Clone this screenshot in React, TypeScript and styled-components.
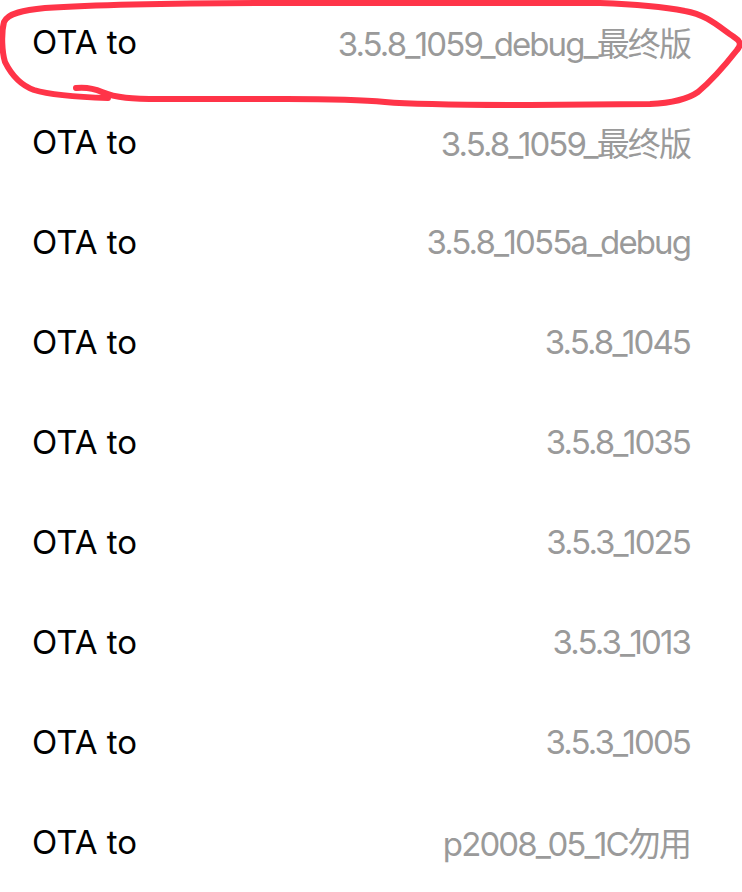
import styled, { createGlobalStyle } from "styled-components";

const versions = [
  "3.5.8_1059_debug_最终版",
  "3.5.8_1059_最终版",
  "3.5.8_1055a_debug",
  "3.5.8_1045",
  "3.5.8_1035",
  "3.5.3_1025",
  "3.5.3_1013",
  "3.5.3_1005",
  "p2008_05_1C勿用",
];

export default function App() {
  return (
    <>
      <GlobalStyle />
      <Page>
        <List>
          {versions.map((v, i) => (
            <Row key={v}>
              <Label>OTA to</Label>
              <Value>{v}</Value>
              {i === 0 && <Scribble />}
            </Row>
          ))}
        </List>
      </Page>
    </>
  );
}

function Scribble() {
  return (
    <Mark viewBox="0 0 742 110" width="742" height="110">
      <path
        d="M 76 88 C 86 87, 93 88, 102 92 C 116 98, 132 99, 160 99 L 250 99
           C 300 99, 345 98, 385 102 C 420 105, 470 105, 530 105 L 650 104
           C 672 103, 688 99, 698 92 C 710 82, 726 64, 737 50
           C 742 44, 740 41, 734 37 C 720 28, 708 15, 685 11
           C 660 6, 630 4, 600 3 L 300 3 C 200 3, 110 4, 45 8
           C 24 10, 8 13, 4 22 C 1 34, 2 52, 5 62 C 11 74, 20 85, 34 90
           C 50 95, 75 97, 108 98"
        fill="none"
        stroke="#ff3448"
        strokeWidth="6"
        strokeLinecap="round"
        strokeLinejoin="round"
      />
    </Mark>
  );
}

const GlobalStyle = createGlobalStyle`
  html, body {
    margin: 0;
    padding: 0;
    background: #ffffff;
    overflow: hidden;
  }
`;

const Page = styled.div`
  width: 742px;
  height: 892px;
  overflow: hidden;
  background: #ffffff;
  font-family: Inter, "Noto Sans CJK SC", sans-serif;
`;

const List = styled.div`
  display: flex;
  flex-direction: column;
  margin-top: -8px;
`;

const Row = styled.div`
  position: relative;
  height: 100px;
  display: flex;
  align-items: center;
  justify-content: space-between;
  padding: 0 52px 0 32px;
`;

const Label = styled.span`
  font-size: 33px;
  color: #000000;
`;

const Value = styled.span`
  font-size: 33px;
  letter-spacing: -1.9px;
  color: #9a9a9a;
`;

const Mark = styled.svg`
  position: absolute;
  left: 0;
  top: 8px;
  pointer-events: none;
`;
